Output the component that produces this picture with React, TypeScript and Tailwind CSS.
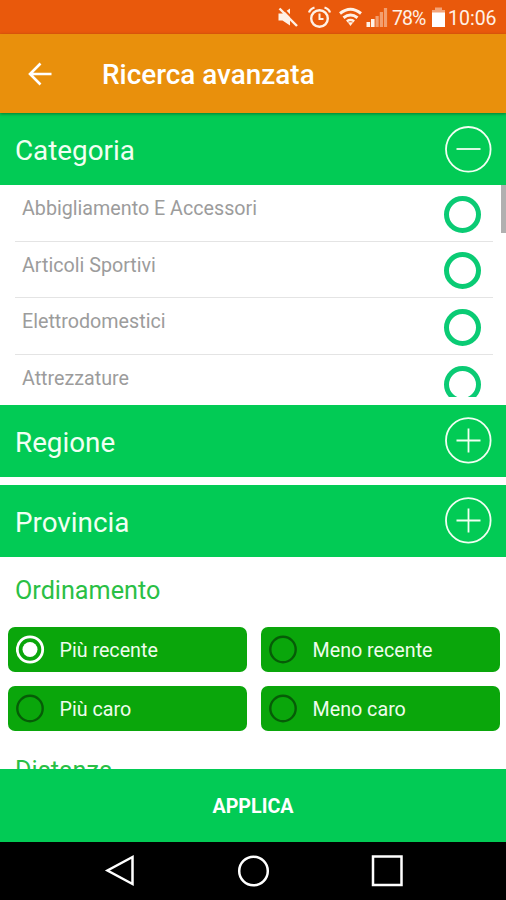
import { useState } from 'react';

const categories = ['Abbigliamento E Accessori', 'Articoli Sportivi', 'Elettrodomestici', 'Attrezzature'];
const sortOptions = ['Più recente', 'Meno recente', 'Più caro', 'Meno caro'];

function StatusBar() {
  return (
    <div className="flex h-[34px] shrink-0 items-center bg-[#e9590c] pl-[277px] text-[19.5px] leading-none text-[#fff1e6]">
      <svg className="h-[22px] w-[22px] shrink-0" viewBox="0 0 22 22">
        <path d="M1.500 7.500h4l7.500-5v17l-7.500-5h-4z" fill="currentColor" />
        <path d="M5 1.500l16 16.500" stroke="#e9590c" strokeWidth="2" />
        <path d="M2.500 2.500l17.500 17.500" stroke="currentColor" strokeWidth="2.400" />
      </svg>
      <svg className="ml-[9px] h-[24px] w-[24px] shrink-0" viewBox="0 0 24 24" fill="none" stroke="currentColor" strokeWidth="2.400">
        <circle cx="11.500" cy="13.500" r="8.300" />
        <path d="M1 7.500q1-3.500 5.500-5M22 7.500q-1-3.500-5.500-5" strokeWidth="2.200" />
        <path d="M11.500 8.500v5.500h4" strokeWidth="2" />
      </svg>
      <svg className="ml-[7px] h-[22px] w-[24px] shrink-0" viewBox="0 0 24 22" fill="none" stroke="currentColor" strokeWidth="3">
        <path d="M1 7.500q10.500-8.500 21 0" />
        <path d="M4.500 11.700q7-5.500 14 0" />
        <path d="M7.800 15.300q3.700-2.500 7.400 0" strokeWidth="2.600" />
        <path d="M8.800 16.200h5.400l-2.700 3.800z" fill="currentColor" stroke="none" />
      </svg>
      <svg className="ml-[3px] h-[22px] w-[22px] shrink-0" viewBox="0 0 22 22" fill="currentColor">
        <path d="M0.500 16h3.600v5h-3.600zM5 13h3.600v8h-3.600z" />
        <path d="M9.500 10h3.200v11h-3.200zM13.800 6h3.200v15h-3.200zM17.900 2h3.200v19h-3.200z" opacity="0.450" />
      </svg>
      <span className="ml-[4px] w-[35px] shrink-0 whitespace-nowrap pt-[3px] tracking-[-0.9px]">78%</span>
      <svg className="ml-[4px] h-[22px] w-[15px] shrink-0" viewBox="0 0 15 22">
        <path d="M4 1.500h7v2.500h3v4h-13v-4h3z" fill="#fff" opacity="0.450" />
        <path d="M1 6.500h13v14.500h-13z" fill="#fff" />
      </svg>
      <span className="ml-[2px] whitespace-nowrap pt-[3px]">10:06</span>
    </div>
  );
}

function SectionHeader({ title, open = false }: { title: string; open?: boolean }) {
  return (
    <div className="flex h-[72px] shrink-0 items-center justify-between bg-[#02cb55] pl-[15px] pr-[14px] text-[#f1fff2]">
      <h2 className="pt-[3px] text-[27.800px] leading-none">{title}</h2>
      <svg className="h-[48px] w-[48px]" viewBox="0 0 48 48" fill="none" stroke="currentColor" strokeWidth="1.800">
        <circle cx="24.300" cy={open ? 24.3 : 23.4} r="22.300" />
        <path d={open ? 'M12.500 24h24' : 'M12.500 23.500h24M24.500 11.500v24'} />
      </svg>
    </div>
  );
}

function SortOption({ label, checked, onClick }: { label: string; checked: boolean; onClick: () => void }) {
  return (
    <button onClick={onClick} className="flex h-[45px] items-center rounded-[7px] bg-[#0aa60b] pl-[8px] text-left">
      <svg className="h-[30px] w-[30px] shrink-0" viewBox="0 0 30 30">
        <circle cx="14" cy="14.500" r="12.700" fill="none" stroke={checked ? '#fff' : '#065c07'} strokeWidth={checked ? 2.8 : 2.4} />
        {checked && <circle cx="14" cy="14.500" r="7.500" fill="#fff" />}
      </svg>
      <span className="ml-[13.500px] whitespace-nowrap pt-[2px] text-[19.700px] leading-none text-[#effced]">{label}</span>
    </button>
  );
}

export default function App() {
  const [sort, setSort] = useState('Più recente');

  return (
    <div className="flex h-[900px] w-[506px] flex-col overflow-hidden bg-white font-['Roboto',sans-serif]">
      <StatusBar />

      <header className="z-10 flex h-[79px] shrink-0 items-center bg-[#e9900c] pl-[28px] text-white shadow-[0_1px_3px_rgba(0,0,0,0.4)]">
        <svg className="h-[24px] w-[24px]" viewBox="0 0 24 24" fill="none" stroke="currentColor" strokeWidth="2.600">
          <path d="M23.500 12h-21M12.500 1.500l-10.500 10.500l10.500 10.500" />
        </svg>
        <h1 className="ml-[50px] pt-[2px] text-[27.900px] font-medium leading-none">Ricerca avanzata</h1>
      </header>

      <SectionHeader title="Categoria" open />
      <div className="flex h-[220px] shrink-0 pb-[8px]">
        <ul className="flex-1 overflow-hidden pl-[15px] pr-[8px]">
          {categories.map((name) => (
            <li key={name} className="flex h-[56.7px] items-start justify-between border-b border-[#e4e4e4] pl-[7px] pr-[12px]">
              <span className="pt-[14px] text-[19.700px] leading-[20px] text-[#9c9c9c]">{name}</span>
              <span className="mt-[10.500px] h-[37px] w-[37px] rounded-full border-[5px] border-[#0acb74]" />
            </li>
          ))}
        </ul>
        <div className="h-[48px] w-[5px] bg-[#b0b0b0]" />
      </div>

      <SectionHeader title="Regione" />
      <div className="h-[8px] shrink-0" />
      <SectionHeader title="Provincia" />

      <div className="h-[212px] shrink-0 overflow-hidden pl-[8px] pr-[6px]">
        <h3 className="pl-[7px] pt-[21px] text-[25.200px] leading-[26px] text-[#2abf45]">Ordinamento</h3>
        <div className="mt-[23px] grid grid-cols-2 gap-x-[14px] gap-y-[14px]">
          {sortOptions.map((label) => (
            <SortOption key={label} label={label} checked={sort === label} onClick={() => setSort(label)} />
          ))}
        </div>
        <h3 className="pl-[7px] pt-[27px] text-[25.200px] leading-[26px] text-[#2abf45]">Distanza</h3>
      </div>

      <button className="h-[73px] shrink-0 bg-[#02cb55] pt-[2px] text-[19.700px] font-bold text-white">APPLICA</button>

      <nav className="flex h-[58px] shrink-0 items-center justify-between bg-black pl-[104px] pr-[102px]">
        <svg className="h-[34px] w-[34px]" viewBox="0 0 34 34" fill="none" stroke="#fff" strokeWidth="2.500">
          <path d="M28.500 3v27L3.500 16.500z" />
        </svg>
        <svg className="h-[34px] w-[34px]" viewBox="0 0 34 34" fill="none" stroke="#fff" strokeWidth="2.500">
          <circle cx="16.500" cy="17" r="14.300" />
        </svg>
        <svg className="h-[34px] w-[34px]" viewBox="0 0 34 34" fill="none" stroke="#fff" strokeWidth="2.500">
          <path d="M3 2.500h28.500v28.500h-28.500z" />
        </svg>
      </nav>
    </div>
  );
}
